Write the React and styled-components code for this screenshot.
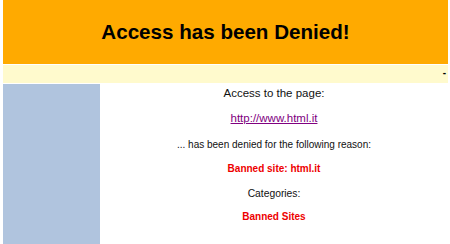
import styled, { createGlobalStyle } from "styled-components"

const GlobalStyle = createGlobalStyle`
    html, body {
        margin: 0;
        padding: 0;
        background: #ffffff;
    }
    body {
        font-family: "Liberation Sans", Arial, sans-serif;
    }
`

export default function App() {
    return <Page>
        <GlobalStyle />
        <Header>
            <Title>Access has been Denied!</Title>
        </Header>
        <InfoBar>-</InfoBar>
        <Body>
            <Sidebar />
            <Content>
                <Line size={11.5} rowHeight={25}>Access to the page:</Line>
                <Link href="#">http://www.html.it</Link>
                <Line size={10} rowHeight={23.5}>... has been denied for the following reason:</Line>
                <Reason rowHeight={25}>Banned site: html.it</Reason>
                <Line size={10.3} rowHeight={23.5}>Categories:</Line>
                <Reason rowHeight={24}>Banned Sites</Reason>
            </Content>
        </Body>
    </Page>
}

const Page = styled.div`
    display: flex;
    flex-direction: column;
    height: 244px;
    padding: 0 2px 0 3px;
    box-sizing: border-box;
`

const Header = styled.div`
    background: #ffaa00;
    height: 64px;
    display: flex;
    align-items: center;
    justify-content: center;
`

const Title = styled.h1`
    margin: 0;
    font-size: 20.6px;
    font-weight: bold;
    color: #000000;
`

const InfoBar = styled.div`
    background: #fffacd;
    height: 18px;
    margin-top: 1px;
    display: flex;
    align-items: center;
    justify-content: flex-end;
    padding-right: 2px;
    padding-bottom: 3px;
    box-sizing: border-box;
    font-size: 10px;
    font-weight: bold;
`

const Body = styled.div`
    flex: 1;
    display: flex;
    margin-top: 1px;
`

const Sidebar = styled.div`
    width: 97px;
    background: #b0c4de;
`

const Content = styled.div`
    flex: 1;
    display: flex;
    flex-direction: column;
    align-items: center;
`

const Line = styled.p`
    margin: 0;
    height: ${(p) => p.rowHeight}px;
    line-height: 18px;
    font-size: ${(p) => p.size}px;
    color: #111111;
`

const Link = styled.a`
    height: 27px;
    line-height: 18px;
    font-size: 11.5px;
    color: #800080;
    text-decoration: underline;
`

const Reason = styled.p`
    margin: 0;
    height: ${(p) => p.rowHeight}px;
    line-height: 18px;
    font-size: 10px;
    font-weight: bold;
    color: #ee0000;
`
